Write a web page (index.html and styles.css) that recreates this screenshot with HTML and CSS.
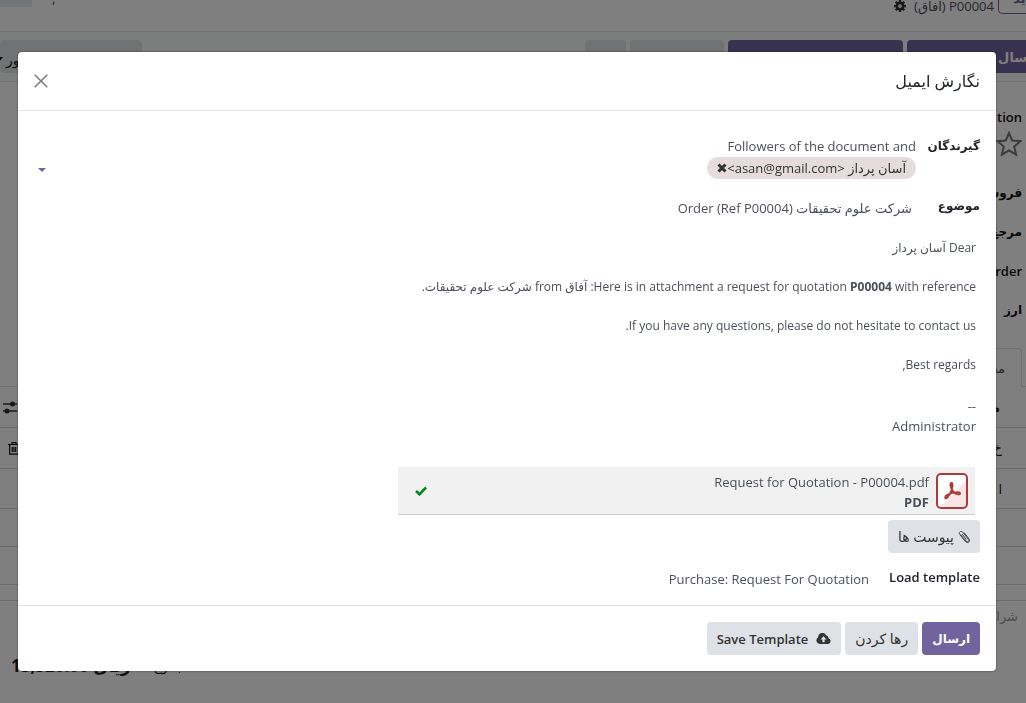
FILE: index.html
```html
<!DOCTYPE html>
<html lang="fa" dir="rtl">
<head>
<meta charset="utf-8">
<title>نگارش ایمیل</title>
<link rel="stylesheet" href="styles.css">
</head>
<body>
<div class="page">
  <header class="topbar">
    <button class="btn-new">جدید</button>
    <span class="crumb">P00004 (آفاق)</span>
    <svg class="gear" viewBox="0 0 16 16" width="12" height="12"><circle cx="8" cy="8" r="4.3" fill="none" stroke="currentColor" stroke-width="3.6"/><path d="M8 0v3M8 13v3M0 8h3M13 8h3M2.3 2.3l2.2 2.2M11.500 11.500l2.200 2.200M2.300 13.700l2.200-2.200M11.500 4.500l2.200-2.200" stroke="currentColor" stroke-width="3"/></svg>
    <span class="spacer"></span>
    <span class="pager-mark">,</span>
    <span class="pager-box"></span>
  </header>
  <div class="statusbar">
    <button class="sb primary sb-send">ارسال ایمیل</button>
    <button class="sb primary sb-print" aria-label="چاپ"></button>
    <button class="sb sb-confirm" aria-label="تایید"></button>
    <button class="sb sb-cancel" aria-label="لغو"></button>
    <span class="spacer"></span>
    <button class="sb sb-stage">ور <svg viewBox="0 0 8 5" width="8" height="5"><path d="M0 0h8L4 5z" fill="currentColor"/></svg></button>
  </div>
  <main class="sheet">
    <div class="field-labels">
      <span class="latin">tion</span>
      <svg viewBox="0 0 26 26" width="26" height="26"><path d="M13 2l3.200 7.500 8.300.7-6.300 5.400 1.900 8L13 19.400l-7.100 4.200 1.900-8L1.500 10.200l8.300-.7z" fill="none" stroke="#777" stroke-width="2"/></svg>
      <span>فروشنده</span>
      <span>مرجع</span>
      <span class="latin">rder</span>
      <span>ارز</span>
    </div>
    <div class="tabs"><span class="tab">محصولات</span></div>
    <div class="lines">
      <div class="line head"><b>م</b><svg viewBox="0 0 16 14" width="16" height="14"><path d="M1 4h14M1 11h14" stroke="#333" stroke-width="1.500"/><circle cx="10.500" cy="4" r="2.500" fill="#333"/><circle cx="5" cy="11" r="2.500" fill="#333"/></svg></div>
      <div class="line item"><span>خ</span><svg viewBox="0 0 12 13" width="12" height="13"><path d="M0 2.500h12M4 2V.7h4V2M1.700 3v9.200h8.600V3M4.300 5v5M6 5v5M7.700 5v5" fill="none" stroke="#111" stroke-width="1.200"/></svg></div>
      <div class="line item"><span>ا</span></div>
      <div class="line"></div>
      <div class="line"></div>
      <div class="line gap"></div>
    </div>
    <div class="terms">شرایط</div>
    <div class="total"><span>مجموع:</span><b dir="ltr">15,520.00 ریال</b></div>
  </main>
</div>

<div class="backdrop">
  <section class="modal" role="dialog" aria-labelledby="dlg-title">
    <header class="modal-header">
      <h1 id="dlg-title">نگارش ایمیل</h1>
      <button class="close" aria-label="بستن"><svg viewBox="0 0 14 14" width="14" height="14"><path d="M.7.7l12.600 12.600M13.300.7L.7 13.300" stroke="#7b7d80" stroke-width="1.600"/></svg></button>
    </header>
    <div class="modal-body">
      <div class="row recipients">
        <label class="name" for="rcpt">گیرندگان</label>
        <div class="value">
          <div>Followers of the document and</div>
          <div class="tag-line">
            <span class="tag">آسان پرداز &lt;asan@gmail.com&gt;<button class="remove" aria-label="حذف"><svg viewBox="0 0 10 10" width="10" height="10"><path d="M1.500 1.500l7 7M8.500 1.500l-7 7" stroke="#333" stroke-width="3"/></svg></button></span>
            <input id="rcpt" class="plain grow" type="text">
            <svg class="caret" viewBox="0 0 8 4" width="8" height="4"><path d="M0 0h8L4 4z" fill="#71639e"/></svg>
          </div>
        </div>
      </div>
      <div class="row subject">
        <label class="name" for="subj">موضوع</label>
        <input id="subj" class="plain grow" type="text" value="شرکت علوم تحقیقات Order (Ref P00004)">
      </div>
      <div class="message">
        <p>Dear آسان پرداز</p>
        <p>Here is in attachment a request for quotation <b>P00004</b> with reference: آفاق from شرکت علوم تحقیقات.</p>
        <p>If you have any questions, please do not hesitate to contact us.</p>
        <p>Best regards,</p>
        <div class="signature">--<br>Administrator</div>
      </div>
      <div class="attachment">
        <svg class="pdf" viewBox="0 0 32 36" width="32" height="36"><rect x="1" y="1" width="30" height="34" rx="4" fill="#fff"/><path d="M30 7v24a4 4 0 0 1-4 4H4z" fill="#f7e6e5"/><rect x="1" y="1" width="30" height="34" rx="4" fill="none" stroke="#ad3a36" stroke-width="2"/><path d="M15.500 10c-1.500 0-1.300 3 .2 6 1.300 2.700 3.500 5 6.800 5.300 2.300 0 2-2.200-.5-2.200-4 0-8 1.200-11 3-2.200 1.400-2.300 3.400-.8 3.200 2.200-.4 6-8.500 6.300-12.300.1-1.800-.2-3-1-3z" fill="none" stroke="#ad3a36" stroke-width="1.900"/></svg>
        <div class="file"><span>Request for Quotation - P00004.pdf</span><b>PDF</b></div>
        <svg class="check" viewBox="0 0 12 10" width="12" height="10"><path d="M1 5l3.500 3.300L11 1.500" fill="none" stroke="#008818" stroke-width="2.600"/></svg>
      </div>
      <button class="btn attach"><svg viewBox="0 0 12 14" width="12" height="14"><path d="M2.500 4.500l5.700 6.700c1.300 1.400 3.300-.2 2.200-1.800L4.700 2.200C3 .2.2 2.300 1.700 4.400l5.500 6.900c2.500 2.900 5.800.2 3.700-2.600L6 2.500M4 4.200l4.300 5.200" fill="none" stroke="#444" stroke-width="1"/></svg> پیوست ها</button>
      <div class="row template">
        <label class="name latin" for="tmpl">Load template</label>
        <input id="tmpl" class="plain grow" type="text" value="Purchase: Request For Quotation">
      </div>
    </div>
    <footer class="modal-footer">
      <button class="btn send">ارسال</button>
      <button class="btn discard">رها کردن</button>
      <button class="btn"><svg viewBox="0 0 16 12" width="15" height="11"><path d="M4 12a4 4 0 0 1-1.800-7.400A4.600 4.600 0 0 1 11 2.700a2.600 2.600 0 0 1 2.300 3A3.200 3.200 0 0 1 12.800 12z" fill="#333"/><path d="M8 3.500L4.800 7h2v3h2.400V7h2z" fill="#dee2e6"/></svg> Save Template</button>
    </footer>
  </section>
</div>
</body>
</html>
```
FILE: styles.css
```css
* { box-sizing: border-box; }
body {
  margin: 0;
  background: #fff;
  color: #4b5058;
  font: 13px/20px "Open Sans", "Noto Sans", "DejaVu Sans", sans-serif;
}
button, input { font: inherit; color: inherit; }
button { border: 0; cursor: pointer; }
svg { flex: none; }
.spacer, .grow { flex: 1; }

.page { height: 100vh; overflow: hidden; }
.topbar {
  display: flex;
  align-items: flex-end;
  gap: 8px;
  height: 32px;
  padding-bottom: 15px;
  border-bottom: 1px solid #dee2e6;
}
.btn-new {
  flex: none;
  width: 60px;
  height: 32px;
  margin: 0 -32px 2px -4px;
  border: 1px solid #71639e;
  border-radius: 4px;
  background: #fff;
  color: #71639e;
  font-weight: 600;
}
.gear { margin-bottom: 4px; color: #333; }
.pager-mark { padding-bottom: 8px; line-height: 20px; }
.pager-box { width: 32px; height: 32px; margin: 0 12px 9px 0; background: #e7e9ed; }
.statusbar {
  display: flex;
  gap: 4px;
  height: 50px;
  padding: 8px 0;
  background: #f9fafb;
  border-bottom: 1px solid #dee2e6;
}
.sb { flex: none; height: 33px; border-radius: 4px; background: #e2e5e8; }
.sb.primary { background: #71639e; color: #fff; font-weight: 600; }
.sb-send { width: 140px; margin-right: -21px; padding: 0 8px; text-align: right; }
.sb-print { width: 175px; }
.sb-confirm { width: 94px; }
.sb-cancel { width: 41px; }
.sb-stage {
  display: flex;
  align-items: center;
  justify-content: flex-end;
  gap: 3px;
  width: 142px;
  padding: 6px 0 0;
  color: #111;
  font-size: 14px;
}
.sb-stage svg { margin-left: -5px; }
.field-labels {
  display: flex;
  flex-direction: column;
  height: 266px;
  padding: 25px 4px 0;
  color: #111;
  font-size: 12px;
  font-weight: 600;
}
.field-labels .latin { font-size: 13px; }
.field-labels span { height: 39px; }
.field-labels span:first-child { height: 24px; }
.field-labels svg { margin-bottom: 26px; }
.tabs { display: flex; height: 39px; padding-right: 4px; border-bottom: 1px solid #dee2e6; }
.tab { height: 39px; padding: 9px 16px; border: 1px solid #dee2e6; border-bottom-color: #fff; border-radius: 4px 4px 0 0; }
.line {
  display: flex;
  align-items: center;
  justify-content: space-between;
  height: 38px;
  padding: 0 26px 0 2px;
  border-bottom: 1px solid #d5d7da;
  color: #111;
}
.line.head, .line.item { height: 41px; }
.line.item { padding-left: 8px; padding-right: 24px; }
.line.item + .line.item { height: 40px; }
.line.gap { height: 16px; }
.terms { padding: 5px 8px 0; color: #999; }
.total { display: flex; justify-content: flex-end; align-items: center; gap: 20px; padding: 28px 0 0 11px; color: #222; }
.total b { font-size: 17px; line-height: 24px; }

.backdrop {
  position: fixed;
  inset: 0;
  padding: 52px 30px 32px 18px;
  background: rgba(0, 0, 0, .5);
}
.modal { background: #fff; border-radius: 4px; box-shadow: 0 0 2px rgba(0, 0, 0, .6); }
.modal-header {
  display: flex;
  align-items: center;
  justify-content: space-between;
  height: 59px;
  padding: 0 16px;
  border-bottom: 1px solid #dee2e6;
}
.modal-header h1 { margin: 0; color: #212529; font-size: 16px; line-height: 27px; font-weight: 400; }
.close { display: flex; padding: 0; background: none; }
.modal-body { padding: 25px 16px 14px; }
.row { display: flex; }
.name { flex: none; width: 64px; color: #212529; font-size: 12px; font-weight: 600; }
.name.latin { font-size: 13px; }
.value { flex: 1; }
.tag-line { display: flex; align-items: center; height: 24px; padding-left: 4px; }
.tag {
  display: flex;
  align-items: center;
  padding: 1px 10px;
  border-radius: 12px;
  background: #e6dcdd;
  color: #333;
}
.caret { margin-top: 4px; }
.remove { display: flex; padding: 0; background: none; }
.plain { min-width: 0; border: 0; padding: 0 4px; background: none; outline: 0; }
.subject { margin-top: 16px; }
.subject .plain { height: 24px; }
.message { padding: 18px 4px 0; font-size: 12px; }
.message p { margin: 0 0 19px; }
.signature { padding-top: 2px; font-size: 13px; }
.attachment {
  display: flex;
  align-items: center;
  width: 61%;
  height: 48px;
  margin: 31px 5px 5px 0;
  padding: 0 7px;
  background: #f1f1f1;
  border-bottom: 1px solid #ccc;
}
.file { display: flex; flex-direction: column; flex: 1; padding: 2px 7px 0; }
.check { margin-left: 10px; }
.btn {
  display: inline-flex;
  align-items: center;
  gap: 8px;
  height: 33px;
  padding: 0 10px;
  border-radius: 4px;
  background: #dee2e6;
  color: #333;
  font-weight: 600;
}
.attach { gap: 4px; font-size: 14px; font-weight: 400; }
.template { margin-top: 14px; }
.template .name { width: 107px; }
.template .plain { height: 24px; }
.modal-footer { display: flex; gap: 4px; padding: 16px; border-top: 1px solid #dee2e6; }
.btn.send { background: #71639e; color: #fff; font-size: 12px; }
.btn.discard { font-size: 14px; font-weight: 400; }
```
